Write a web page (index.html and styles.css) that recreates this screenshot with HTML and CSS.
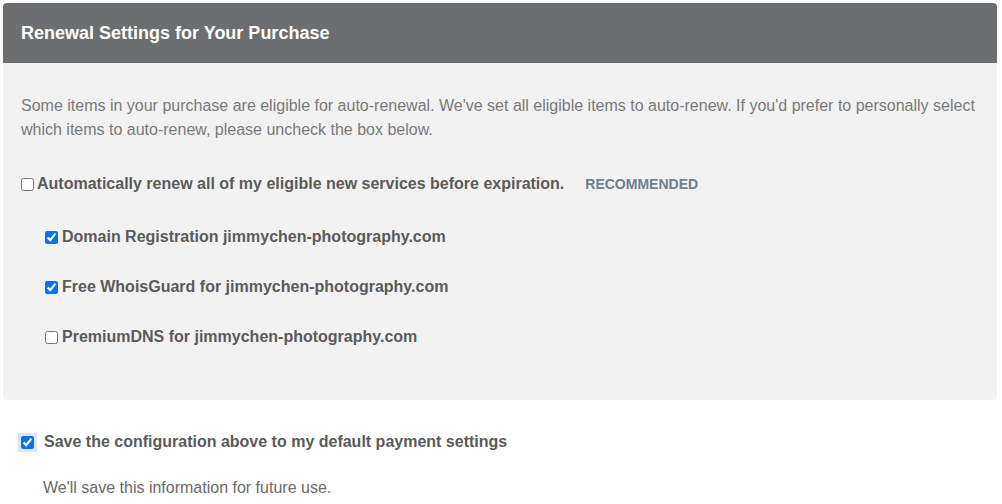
FILE: index.html
```html
<!DOCTYPE html>
<html lang="en">
<head>
<meta charset="utf-8">
<title>Renewal Settings</title>
<link rel="stylesheet" href="styles.css">
</head>
<body>
<div class="page">
  <section class="panel">
    <header class="panel-head">
      <h2 class="panel-title">Renewal Settings for Your Purchase</h2>
    </header>
    <div class="panel-body">
      <p class="intro">Some items in your purchase are eligible for auto-renewal. We've set all eligible items to auto-renew. If you'd prefer to personally select which items to auto-renew, please uncheck the box below.</p>
      <label class="row row-main">
        <input type="checkbox" class="cb">
        <span class="label-text">Automatically renew all of my eligible new services before expiration.</span>
        <span class="badge">RECOMMENDED</span>
      </label>
      <div class="items">
        <label class="row row-item">
          <input type="checkbox" class="cb" checked>
          <span class="label-text">Domain Registration jimmychen-photography.com</span>
        </label>
        <label class="row row-item">
          <input type="checkbox" class="cb" checked>
          <span class="label-text">Free WhoisGuard for jimmychen-photography.com</span>
        </label>
        <label class="row row-item">
          <input type="checkbox" class="cb">
          <span class="label-text">PremiumDNS for jimmychen-photography.com</span>
        </label>
      </div>
    </div>
  </section>
  <div class="save">
    <label class="row row-save">
      <input type="checkbox" class="cb cb-focus" checked>
      <span class="label-text">Save the configuration above to my default payment settings</span>
    </label>
    <p class="save-note">We'll save this information for future use.</p>
  </div>
</div>
</body>
</html>
```

FILE: styles.css
```css
html, body {
  margin: 0;
  padding: 0;
  background: #ffffff;
}
body {
  font-family: "Liberation Sans", Arial, sans-serif;
  font-size: 16px;
  color: #5b5b5b;
}
.page {
  padding: 3px 5px 0 3px;
}
.panel {
  background: #f2f2f2;
  border-radius: 4px;
  overflow: hidden;
}
.panel-head {
  background: #6d6e70;
  height: 60px;
  display: flex;
  align-items: center;
  padding: 0 18px;
}
.panel-title {
  margin: 0;
  color: #ffffff;
  font-size: 18px;
  font-weight: bold;
  line-height: 20px;
}
.panel-body {
  padding: 31px 18px 51px 18px;
}
.intro {
  margin: 0 0 30px 0;
  line-height: 24px;
  color: #7a7a7a;
  font-size: 16px;
}
.row {
  display: flex;
  align-items: center;
  height: 24px;
  line-height: 24px;
  font-weight: bold;
  color: #5b5b5b;
  cursor: pointer;
}
.cb {
  width: 13px;
  height: 13px;
  margin: 0;
  flex: none;
  accent-color: #0b73e6;
}
.row-main .cb {
  margin-right: 3px;
}
.badge {
  margin-left: 21px;
  font-size: 14px;
  font-weight: bold;
  color: #6f7f8e;
}
.items {
  padding-left: 24px;
  padding-top: 29px;
  display: flex;
  flex-direction: column;
  gap: 26px;
}
.row-item .cb {
  margin-right: 4px;
}
.save {
  padding: 30px 0 0 18px;
}
.row-save .cb {
  margin-right: 10px;
}
.cb-focus {
  box-shadow: 0 0 0 3px #d9e6f5;
  border-radius: 2px;
}
.save-note {
  margin: 22px 0 0 22px;
  line-height: 24px;
  color: #6a6a6a;
  font-weight: normal;
}
```
